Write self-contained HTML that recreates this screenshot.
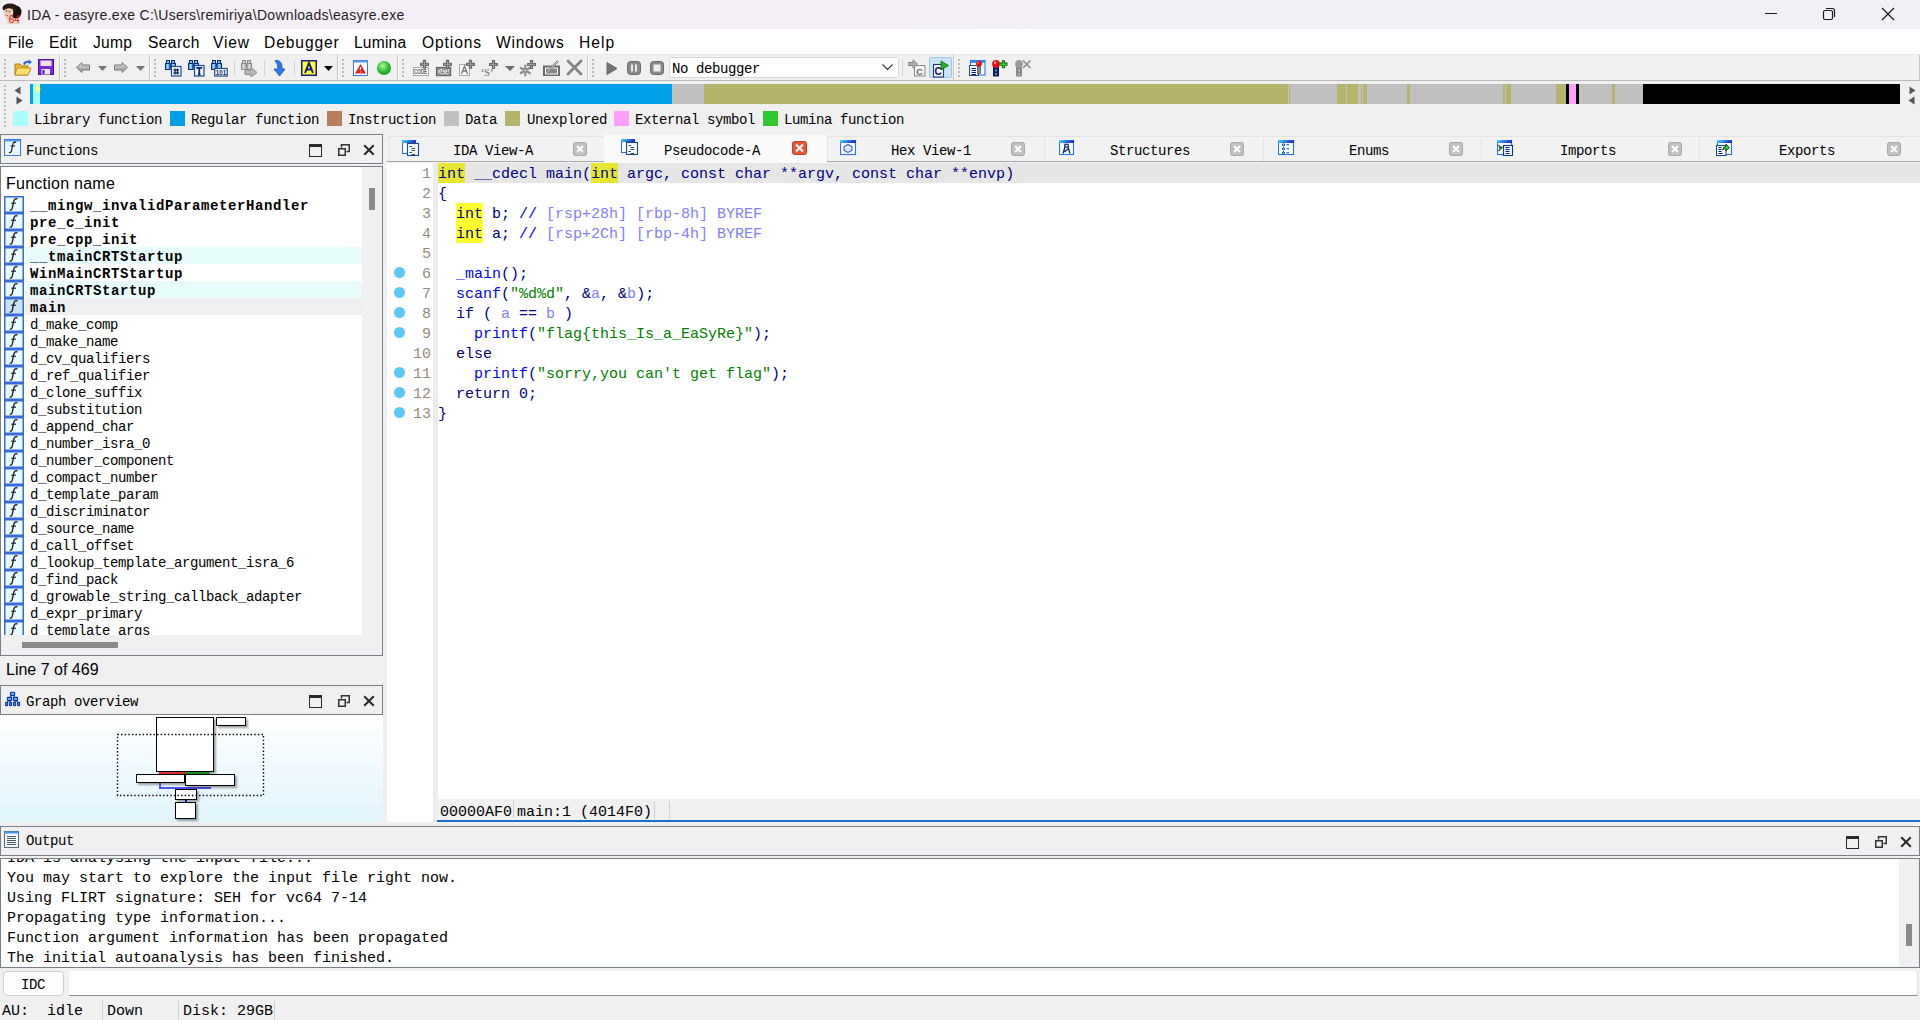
<!DOCTYPE html><html><head><meta charset="utf-8"><title>IDA</title><style>
*{margin:0;padding:0;box-sizing:border-box}
html,body{width:1920px;height:1020px;overflow:hidden;background:#f0f0f0;position:relative;font-family:"Liberation Sans",sans-serif}
.a{position:absolute}
.mono{font-family:"Liberation Mono",monospace}
.sans{font-family:"Liberation Sans",sans-serif}
.t{position:absolute;white-space:pre;line-height:1}
.ln{position:absolute;white-space:pre;font-family:"Liberation Mono",monospace;font-size:15px;line-height:20px}
</style></head><body>
<div class="a" style="left:0;top:0;width:1920px;height:29px;background:linear-gradient(90deg,#f4eef5 0%,#f5eef6 45%,#f3eff6 55%,#f2f0f6 65%,#f0f1f7 100%)"></div>
<svg class="a" style="left:0px;top:0px" width="26" height="28" viewBox="0 0 26 28">
<path d="M6 17 Q9 22 7 24 L20 24 Q17 21 16 17Z" fill="#e6d0c0"/>
<ellipse cx="16" cy="12" rx="5.5" ry="6.5" fill="#1a1010"/>
<ellipse cx="10" cy="8" rx="7.5" ry="4.5" fill="#2a1a14"/>
<ellipse cx="8.5" cy="12.5" rx="4.8" ry="6.2" fill="#e8cdb8"/>
<path d="M3 8 Q7 4 13 6 L12 9 Q8 7 4 10Z" fill="#2a1a14"/>
<circle cx="6.5" cy="11" r="0.8" fill="#5a4030"/><circle cx="9.5" cy="11.5" r="0.8" fill="#5a4030"/>
<path d="M5.5 15.5 Q7 16.2 8 15.5" stroke="#c05a50" stroke-width="0.9" fill="none"/>
<text x="8.8" y="23.2" font-family="Liberation Sans" font-size="10.5" textLength="11" lengthAdjust="spacingAndGlyphs" fill="#e01a10">64</text>
</svg>
<div class="t sans" style="left:27px;top:8px;font-size:14px;letter-spacing:0.3px;color:#1f1f1f">IDA - easyre.exe C:\Users\remiriya\Downloads\easyre.exe</div>
<div class="a" style="left:1765px;top:13px;width:12px;height:1px;background:#1a1a1a"></div>
<svg class="a" style="left:1822px;top:7px" width="14" height="14" viewBox="0 0 14 14"><rect x="1.5" y="3.5" width="9" height="9" rx="1.5" fill="none" stroke="#1a1a1a" stroke-width="1.2"/><path d="M4 1.5 H10.5 Q12.5 1.5 12.5 3.5 V10" fill="none" stroke="#1a1a1a" stroke-width="1.2"/></svg>
<svg class="a" style="left:1881px;top:7px" width="14" height="14" viewBox="0 0 14 14"><path d="M1 1 L13 13 M13 1 L1 13" stroke="#1a1a1a" stroke-width="1.2"/></svg>
<div class="a" style="left:0;top:29px;width:1920px;height:26px;background:#ffffff"></div>
<div class="t sans" style="left:8px;top:34.5px;font-size:15.6px;letter-spacing:0.15px;color:#000">File</div>
<div class="t sans" style="left:49px;top:34.5px;font-size:15.6px;letter-spacing:0.30px;color:#000">Edit</div>
<div class="t sans" style="left:93px;top:34.5px;font-size:15.6px;letter-spacing:0.30px;color:#000">Jump</div>
<div class="t sans" style="left:148px;top:34.5px;font-size:15.6px;letter-spacing:0.40px;color:#000">Search</div>
<div class="t sans" style="left:213px;top:34.5px;font-size:15.6px;letter-spacing:0.80px;color:#000">View</div>
<div class="t sans" style="left:264px;top:34.5px;font-size:15.6px;letter-spacing:0.90px;color:#000">Debugger</div>
<div class="t sans" style="left:354px;top:34.5px;font-size:15.6px;letter-spacing:0.20px;color:#000">Lumina</div>
<div class="t sans" style="left:422px;top:34.5px;font-size:15.6px;letter-spacing:0.90px;color:#000">Options</div>
<div class="t sans" style="left:496px;top:34.5px;font-size:15.6px;letter-spacing:0.75px;color:#000">Windows</div>
<div class="t sans" style="left:579px;top:34.5px;font-size:15.6px;letter-spacing:1.00px;color:#000">Help</div>
<div class="a" style="left:0;top:54px;width:1920px;height:1px;background:#e8e8e8"></div>
<div class="a" style="left:0;top:55px;width:1920px;height:25px;background:#f0f0f0"></div>
<div class="a" style="left:0;top:80px;width:1920px;height:1px;background:#b9b9b9"></div>
<div class="a" style="left:1919px;top:55px;width:1px;height:25px;background:#c8c8c8"></div>
<div class="a" style="left:4px;top:59px;width:2px;height:2px;background:#bcbcbc"></div><div class="a" style="left:4px;top:63px;width:2px;height:2px;background:#bcbcbc"></div><div class="a" style="left:4px;top:67px;width:2px;height:2px;background:#bcbcbc"></div><div class="a" style="left:4px;top:71px;width:2px;height:2px;background:#bcbcbc"></div><div class="a" style="left:4px;top:75px;width:2px;height:2px;background:#bcbcbc"></div>
<div class="a" style="left:64px;top:59px;width:2px;height:2px;background:#bcbcbc"></div><div class="a" style="left:64px;top:63px;width:2px;height:2px;background:#bcbcbc"></div><div class="a" style="left:64px;top:67px;width:2px;height:2px;background:#bcbcbc"></div><div class="a" style="left:64px;top:71px;width:2px;height:2px;background:#bcbcbc"></div><div class="a" style="left:64px;top:75px;width:2px;height:2px;background:#bcbcbc"></div>
<div class="a" style="left:154px;top:59px;width:2px;height:2px;background:#bcbcbc"></div><div class="a" style="left:154px;top:63px;width:2px;height:2px;background:#bcbcbc"></div><div class="a" style="left:154px;top:67px;width:2px;height:2px;background:#bcbcbc"></div><div class="a" style="left:154px;top:71px;width:2px;height:2px;background:#bcbcbc"></div><div class="a" style="left:154px;top:75px;width:2px;height:2px;background:#bcbcbc"></div>
<div class="a" style="left:342px;top:59px;width:2px;height:2px;background:#bcbcbc"></div><div class="a" style="left:342px;top:63px;width:2px;height:2px;background:#bcbcbc"></div><div class="a" style="left:342px;top:67px;width:2px;height:2px;background:#bcbcbc"></div><div class="a" style="left:342px;top:71px;width:2px;height:2px;background:#bcbcbc"></div><div class="a" style="left:342px;top:75px;width:2px;height:2px;background:#bcbcbc"></div>
<div class="a" style="left:402px;top:59px;width:2px;height:2px;background:#bcbcbc"></div><div class="a" style="left:402px;top:63px;width:2px;height:2px;background:#bcbcbc"></div><div class="a" style="left:402px;top:67px;width:2px;height:2px;background:#bcbcbc"></div><div class="a" style="left:402px;top:71px;width:2px;height:2px;background:#bcbcbc"></div><div class="a" style="left:402px;top:75px;width:2px;height:2px;background:#bcbcbc"></div>
<div class="a" style="left:592px;top:59px;width:2px;height:2px;background:#bcbcbc"></div><div class="a" style="left:592px;top:63px;width:2px;height:2px;background:#bcbcbc"></div><div class="a" style="left:592px;top:67px;width:2px;height:2px;background:#bcbcbc"></div><div class="a" style="left:592px;top:71px;width:2px;height:2px;background:#bcbcbc"></div><div class="a" style="left:592px;top:75px;width:2px;height:2px;background:#bcbcbc"></div>
<div class="a" style="left:958px;top:59px;width:2px;height:2px;background:#bcbcbc"></div><div class="a" style="left:958px;top:63px;width:2px;height:2px;background:#bcbcbc"></div><div class="a" style="left:958px;top:67px;width:2px;height:2px;background:#bcbcbc"></div><div class="a" style="left:958px;top:71px;width:2px;height:2px;background:#bcbcbc"></div><div class="a" style="left:958px;top:75px;width:2px;height:2px;background:#bcbcbc"></div>
<div class="a" style="left:59px;top:55px;width:1px;height:25px;background:#c4c4c4"></div>
<div class="a" style="left:60px;top:55px;width:1px;height:25px;background:#fbfbfb"></div>
<div class="a" style="left:149px;top:55px;width:1px;height:25px;background:#c4c4c4"></div>
<div class="a" style="left:150px;top:55px;width:1px;height:25px;background:#fbfbfb"></div>
<div class="a" style="left:337px;top:55px;width:1px;height:25px;background:#c4c4c4"></div>
<div class="a" style="left:338px;top:55px;width:1px;height:25px;background:#fbfbfb"></div>
<div class="a" style="left:397px;top:55px;width:1px;height:25px;background:#c4c4c4"></div>
<div class="a" style="left:398px;top:55px;width:1px;height:25px;background:#fbfbfb"></div>
<div class="a" style="left:587px;top:55px;width:1px;height:25px;background:#c4c4c4"></div>
<div class="a" style="left:588px;top:55px;width:1px;height:25px;background:#fbfbfb"></div>
<div class="a" style="left:953px;top:55px;width:1px;height:25px;background:#c4c4c4"></div>
<div class="a" style="left:954px;top:55px;width:1px;height:25px;background:#fbfbfb"></div>
<div class="a" style="left:234px;top:60px;width:1px;height:16px;background:#d4d4d4"></div>
<div class="a" style="left:264px;top:60px;width:1px;height:16px;background:#d4d4d4"></div>
<div class="a" style="left:294px;top:60px;width:1px;height:16px;background:#d4d4d4"></div>
<div class="a" style="left:902px;top:60px;width:1px;height:16px;background:#d4d4d4"></div>
<svg class="a" style="left:14px;top:59px" width="18" height="18" viewBox="0 0 18 18"><path d="M1 5 H6 L8 7 H14 V16 H1Z" fill="#e8b830" stroke="#b08010" stroke-width="1"/><path d="M3 9 H17 L14 16 H1Z" fill="#ffe070" stroke="#c09020" stroke-width="1"/><path d="M9 5 Q11 1 15 2 L14 0 L18 3 L14 6 L15 4 Q12 3 11 6Z" fill="#3060e0"/></svg>
<svg class="a" style="left:38px;top:59px" width="17" height="17" viewBox="0 0 17 17"><rect x="0.5" y="0.5" width="15" height="15" fill="#7a28e0" stroke="#4a10a0"/><rect x="2.5" y="1.5" width="11" height="5.5" fill="#f0e0e4"/><rect x="3.5" y="10" width="8.5" height="5.5" fill="#e8e8f8"/><rect x="4.5" y="11" width="2" height="4" fill="#4a10a0"/></svg>
<svg class="a" style="left:76px;top:62px" width="14" height="11" viewBox="0 0 14 11"><defs><linearGradient id="arg" x1="0" x2="0" y1="0" y2="1"><stop offset="0" stop-color="#e0e0e0"/><stop offset="1" stop-color="#909090"/></linearGradient></defs><path d="M0.5 5.5 L6 0.5 V3 H13.5 V8 H6 V10.5Z" fill="url(#arg)" stroke="#7a7a7a" stroke-width="1"/></svg>
<svg class="a" style="left:98px;top:66px" width="9" height="5" viewBox="0 0 9 5"><path d="M0 0 H9 L4.5 5Z" fill="#777"/></svg>
<svg class="a" style="left:114px;top:62px" width="14" height="11" viewBox="0 0 14 11"><path d="M13.5 5.5 L8 0.5 V3 H0.5 V8 H8 V10.5Z" fill="url(#arg)" stroke="#7a7a7a" stroke-width="1"/></svg>
<svg class="a" style="left:136px;top:66px" width="9" height="5" viewBox="0 0 9 5"><path d="M0 0 H9 L4.5 5Z" fill="#777"/></svg>
<svg class="a" style="left:165px;top:60px" width="17" height="17" viewBox="0 0 17 17"><defs><linearGradient id="bg1" x1="0" x2="1" y1="0" y2="0"><stop offset="0" stop-color="#3a8ae8"/><stop offset="0.5" stop-color="#a8dcff"/><stop offset="1" stop-color="#3a8ae8"/></linearGradient></defs><rect x="1.5" y="0.5" width="3" height="3.5" fill="url(#bg1)" stroke="#0a2a7a" stroke-width="1"/><rect x="6.5" y="0.5" width="3" height="3.5" fill="url(#bg1)" stroke="#0a2a7a" stroke-width="1"/><rect x="0.5" y="3.5" width="4.5" height="6" fill="url(#bg1)" stroke="#0a2a7a" stroke-width="1"/><rect x="6" y="3.5" width="4.5" height="6" fill="url(#bg1)" stroke="#0a2a7a" stroke-width="1"/><rect x="5" y="4.5" width="1" height="2" fill="#0a2a7a"/><rect x="6.5" y="6.5" width="9.5" height="9.5" fill="#fff" stroke="#1a4a8a" stroke-width="1.2"/><path d="M8.5 10 H14 M8.5 13 H14 M10 8.5 V14.5 M12.5 8.5 V14.5" stroke="#0a2a6a" stroke-width="1.3"/></svg>
<svg class="a" style="left:188px;top:60px" width="17" height="17" viewBox="0 0 17 17"><defs><linearGradient id="bg2" x1="0" x2="1" y1="0" y2="0"><stop offset="0" stop-color="#3a8ae8"/><stop offset="0.5" stop-color="#a8dcff"/><stop offset="1" stop-color="#3a8ae8"/></linearGradient></defs><rect x="1.5" y="0.5" width="3" height="3.5" fill="url(#bg2)" stroke="#0a2a7a" stroke-width="1"/><rect x="6.5" y="0.5" width="3" height="3.5" fill="url(#bg2)" stroke="#0a2a7a" stroke-width="1"/><rect x="0.5" y="3.5" width="4.5" height="6" fill="url(#bg2)" stroke="#0a2a7a" stroke-width="1"/><rect x="6" y="3.5" width="4.5" height="6" fill="url(#bg2)" stroke="#0a2a7a" stroke-width="1"/><rect x="5" y="4.5" width="1" height="2" fill="#0a2a7a"/><rect x="6.5" y="5.5" width="9.5" height="10.5" fill="#eef6ff" stroke="#1a4a8a" stroke-width="1.2"/><path d="M8.3 7.8 H14.2 M11.25 7.8 V14.5 M10 14.5 H12.5" stroke="#0a2a6a" stroke-width="1.8"/></svg>
<svg class="a" style="left:211px;top:60px" width="17" height="17" viewBox="0 0 17 17"><defs><linearGradient id="bg3" x1="0" x2="1" y1="0" y2="0"><stop offset="0" stop-color="#3a8ae8"/><stop offset="0.5" stop-color="#a8dcff"/><stop offset="1" stop-color="#3a8ae8"/></linearGradient></defs><rect x="1.5" y="0.5" width="3" height="3.5" fill="url(#bg3)" stroke="#0a2a7a" stroke-width="1"/><rect x="6.5" y="0.5" width="3" height="3.5" fill="url(#bg3)" stroke="#0a2a7a" stroke-width="1"/><rect x="0.5" y="3.5" width="4.5" height="6" fill="url(#bg3)" stroke="#0a2a7a" stroke-width="1"/><rect x="6" y="3.5" width="4.5" height="6" fill="url(#bg3)" stroke="#0a2a7a" stroke-width="1"/><rect x="5" y="4.5" width="1" height="2" fill="#0a2a7a"/><rect x="3.7" y="8.5" width="12.5" height="7.5" fill="#fff" stroke="#1a4a8a" stroke-width="1.2"/><text x="4.8" y="14.8" font-family="Liberation Sans" font-weight="bold" font-size="6.5" textLength="10.5" lengthAdjust="spacingAndGlyphs" fill="#0a2a6a">101</text></svg>
<svg class="a" style="left:241px;top:60px" width="17" height="17" viewBox="0 0 17 17"><defs><linearGradient id="bg4" x1="0" x2="1" y1="0" y2="0"><stop offset="0" stop-color="#a8a8a8"/><stop offset="0.5" stop-color="#e0e0e0"/><stop offset="1" stop-color="#a8a8a8"/></linearGradient></defs><rect x="1.5" y="0.5" width="3" height="3.5" fill="url(#bg4)" stroke="#8a8a8a" stroke-width="1"/><rect x="6.5" y="0.5" width="3" height="3.5" fill="url(#bg4)" stroke="#8a8a8a" stroke-width="1"/><rect x="0.5" y="3.5" width="4.5" height="6" fill="url(#bg4)" stroke="#8a8a8a" stroke-width="1"/><rect x="6" y="3.5" width="4.5" height="6" fill="url(#bg4)" stroke="#8a8a8a" stroke-width="1"/><rect x="5" y="4.5" width="1" height="2" fill="#8a8a8a"/><path d="M4 10 H10 V7.5 L16 12.5 L10 17 V14.5 H4Z" fill="#b8b8b8" stroke="#8a8a8a"/></svg>
<svg class="a" style="left:273px;top:60px" width="13" height="17" viewBox="0 0 13 17"><path d="M3 0 Q10 1 9 9 H12 L6.5 16 L1 9 H5 Q5 3 2 1Z" fill="#2a7ae8" stroke="#1050c0" stroke-width="0.8"/></svg>
<svg class="a" style="left:301px;top:60px" width="16" height="16" viewBox="0 0 16 16"><rect x="0.75" y="0.75" width="14.5" height="14.5" fill="#ffff30" stroke="#1a1a80" stroke-width="1.5"/><path d="M4 13 L8 3 L12 13 M5.5 9.5 H10.5" stroke="#1a1a90" stroke-width="2" fill="none"/></svg>
<svg class="a" style="left:324px;top:66px" width="9" height="5" viewBox="0 0 9 5"><path d="M0 0 H9 L4.5 5Z" fill="#000"/></svg>
<svg class="a" style="left:353px;top:60px" width="15" height="16" viewBox="0 0 15 16"><rect x="0.5" y="0.5" width="14" height="15" fill="#fff" stroke="#3a7ad8"/><rect x="0.5" y="0.5" width="14" height="2" fill="#5a9ae8"/><path d="M7.5 4 L13 13.5 H2Z" fill="#e02020"/><path d="M7.5 7 V10 M7.5 11.5 V12.5" stroke="#fff" stroke-width="1.2"/></svg>
<div class="a" style="left:377px;top:61px;width:14px;height:14px;border-radius:50%;background:radial-gradient(circle at 40% 35%,#b0ffa0 0%,#30c030 45%,#108010 100%)"></div>
<svg class="a" style="left:412px;top:59px" width="20" height="18" viewBox="0 0 20 18"><rect x="1.5" y="8.5" width="15" height="8" fill="#fff" stroke="#aaa"/><text x="2" y="15" font-family="Liberation Sans" font-weight="bold" font-size="6.4" textLength="13" lengthAdjust="spacingAndGlyphs" fill="#555">CODE</text><path d="M8.0 5.3 h9 M12.5 0.8 v9" stroke="#6a6a6a" stroke-width="3.2"/><path d="M9.0 5.3 h7 M12.5 1.8 v7" stroke="#9a9a9a" stroke-width="1"/></svg>
<svg class="a" style="left:435px;top:59px" width="20" height="18" viewBox="0 0 20 18"><rect x="1.8" y="8.8" width="13.5" height="7.5" fill="#fff" stroke="#666" stroke-width="1.8"/><text x="3" y="15" font-family="Liberation Sans" font-weight="bold" font-size="6.4" textLength="11" lengthAdjust="spacingAndGlyphs" fill="#666">DATA</text><path d="M8.0 5.3 h9 M12.5 0.8 v9" stroke="#6a6a6a" stroke-width="3.2"/><path d="M9.0 5.3 h7 M12.5 1.8 v7" stroke="#9a9a9a" stroke-width="1"/></svg>
<svg class="a" style="left:458px;top:59px" width="20" height="18" viewBox="0 0 20 18"><rect x="1.5" y="5.5" width="10" height="11" fill="#fafafa" stroke="#aaa"/><path d="M3.5 15 L6.5 7 L9.5 15 M5 12 H8" stroke="#777" stroke-width="1.3" fill="none"/><path d="M8.0 5.3 h9 M12.5 0.8 v9" stroke="#6a6a6a" stroke-width="3.2"/><path d="M9.0 5.3 h7 M12.5 1.8 v7" stroke="#9a9a9a" stroke-width="1"/></svg>
<svg class="a" style="left:481px;top:59px" width="18" height="18" viewBox="0 0 18 18"><text x="0" y="17" font-family="Liberation Serif" font-weight="bold" font-size="10" fill="#888">‘S’</text><path d="M8.0 5.5 h9 M12.5 1.0 v9" stroke="#6a6a6a" stroke-width="3.2"/><path d="M9.0 5.5 h7 M12.5 2.0 v7" stroke="#9a9a9a" stroke-width="1"/></svg>
<svg class="a" style="left:505px;top:66px" width="10" height="5" viewBox="0 0 10 5"><path d="M0 0 H10 L5 5Z" fill="#6a6a6a"/></svg>
<svg class="a" style="left:519px;top:59px" width="18" height="18" viewBox="0 0 18 18"><path d="M6.3 6.5 V16.5 M1.8 9 L10.8 14 M10.8 9 L1.8 14" stroke="#8a8a8a" stroke-width="2.2" stroke-linecap="round"/><circle cx="6.3" cy="11.5" r="1" fill="#ccc"/><path d="M8.0 5.5 h9 M12.5 1.0 v9" stroke="#6a6a6a" stroke-width="3.2"/><path d="M9.0 5.5 h7 M12.5 2.0 v7" stroke="#9a9a9a" stroke-width="1"/></svg>
<svg class="a" style="left:543px;top:59px" width="17" height="17" viewBox="0 0 17 17"><rect x="1" y="7.5" width="15" height="9" fill="#fff" stroke="#6a6a6a" stroke-width="2"/><rect x="3" y="9.5" width="11" height="5" fill="#888"/><path d="M3.5 14 L15 2" stroke="#777" stroke-width="2"/><path d="M3.5 14 L15 2" stroke="#eee" stroke-width="0.8"/></svg>
<svg class="a" style="left:566px;top:59px" width="17" height="17" viewBox="0 0 17 17"><path d="M2 2 L15 15 M15 2 L2 15" stroke="#7a7a7a" stroke-width="2.6" stroke-linecap="round"/><path d="M2 2 L15 15 M15 2 L2 15" stroke="#b0b0b0" stroke-width="0.8" stroke-dasharray="1 1"/></svg>
<svg class="a" style="left:606px;top:62px" width="12" height="13" viewBox="0 0 12 13"><path d="M1 0.5 L11 6.5 L1 12.5Z" fill="#777" stroke="#666"/></svg>
<svg class="a" style="left:627px;top:61px" width="14" height="14" viewBox="0 0 14 14"><rect x="0.5" y="0.5" width="13" height="13" rx="3" fill="#8a8a8a" stroke="#6a6a6a"/><rect x="4" y="3.5" width="2" height="7" fill="#eee"/><rect x="8" y="3.5" width="2" height="7" fill="#eee"/></svg>
<svg class="a" style="left:650px;top:61px" width="14" height="14" viewBox="0 0 14 14"><rect x="0.5" y="0.5" width="13" height="13" rx="3" fill="#8a8a8a" stroke="#6a6a6a"/><rect x="3.5" y="3.5" width="7" height="7" fill="#eee"/></svg>
<div class="a" style="left:669px;top:57px;width:230px;height:21px;background:#fff;border:1px solid #d8d8d8;border-radius:2px"></div>
<div class="t mono" style="left:672px;top:62px;font-size:14px;letter-spacing:-0.4px;color:#000">No debugger</div>
<svg class="a" style="left:882px;top:64px" width="11" height="7" viewBox="0 0 11 7"><path d="M0.5 0.5 L5.5 5.5 L10.5 0.5" stroke="#333" fill="none" stroke-width="1.1"/></svg>
<svg class="a" style="left:908px;top:59px" width="18" height="18" viewBox="0 0 18 18"><rect x="6.5" y="6.5" width="10.5" height="10.5" fill="#f4f4f4" stroke="#8a8a8a"/><text x="8.2" y="15.5" font-family="Liberation Sans" font-weight="bold" font-size="9" fill="#6a6a6a">C</text><path d="M0.5 3.5 H5 V0.8 L9.5 5 L5 9.2 V6.5 H0.5Z" fill="#b0b0b0" stroke="#808080" stroke-width="0.9"/></svg>
<div class="a" style="left:929px;top:57px;width:23px;height:21px;background:#cce4f7;border:1px solid #99c9ef;border-radius:2px"></div>
<svg class="a" style="left:932px;top:60px" width="18" height="18" viewBox="0 0 18 18"><rect x="1.5" y="4.5" width="10" height="12.5" fill="#f8fbff" stroke="#1a3a7a" stroke-width="1.1"/><text x="2.6" y="15" font-family="Liberation Sans" font-weight="bold" font-size="10" fill="#0a0a6a">C</text><path d="M9 1 L16.5 5.5 L9 10Z" fill="#28b028" stroke="#0a6a0a" stroke-width="0.8"/></svg>
<svg class="a" style="left:969px;top:60px" width="17" height="17" viewBox="0 0 17 17"><rect x="1.5" y="0.5" width="14.5" height="14.5" fill="#f4faff" stroke="#2a6ae0"/><rect x="1.5" y="0.5" width="14.5" height="2.5" fill="#3a90f0"/><rect x="0.5" y="5.5" width="9" height="10" fill="#f4faff" stroke="#1a4a8a"/><path d="M2.5 8.5 H7 M2.5 10.5 H7 M2.5 12.5 H7 M2.5 14.5 H7" stroke="#0a10a0"/><rect x="8.5" y="6" width="3" height="7.5" fill="#888" stroke="#333" stroke-width="0.6"/><circle cx="10" cy="3.6" r="2.9" fill="#e81010"/><circle cx="9.2" cy="2.8" r="0.9" fill="#ff9090"/></svg>
<svg class="a" style="left:991px;top:60px" width="18" height="17" viewBox="0 0 18 17"><rect x="2" y="6.5" width="6" height="10" fill="#0a1a6a"/><circle cx="5" cy="10.5" r="1.1" fill="#999"/><circle cx="5" cy="14" r="1.1" fill="#999"/><circle cx="5" cy="4" r="3.9" fill="#e81010"/><circle cx="4" cy="2.8" r="1.2" fill="#ff9a9a"/><path d="M8.5 4.2 H16.5 M12.5 0.2 V8.2" stroke="#0a5a0a" stroke-width="3.2"/><path d="M9.2 4.2 H15.8 M12.5 0.9 V7.5" stroke="#30d030" stroke-width="1.6"/></svg>
<svg class="a" style="left:1014px;top:60px" width="18" height="17" viewBox="0 0 18 17"><rect x="2" y="6.5" width="6" height="10" fill="#8a8a8a"/><circle cx="5" cy="10.5" r="1.1" fill="#bbb"/><circle cx="5" cy="14" r="1.1" fill="#bbb"/><circle cx="5" cy="4" r="3.9" fill="#9a9a9a"/><path d="M9 0.5 L16.5 8 M16.5 0.5 L9 8" stroke="#8a8a8a" stroke-width="1.5"/></svg>
<div class="a" style="left:4px;top:85px;width:2px;height:2px;background:#bcbcbc"></div><div class="a" style="left:4px;top:89px;width:2px;height:2px;background:#bcbcbc"></div><div class="a" style="left:4px;top:93px;width:2px;height:2px;background:#bcbcbc"></div><div class="a" style="left:4px;top:97px;width:2px;height:2px;background:#bcbcbc"></div><div class="a" style="left:4px;top:101px;width:2px;height:2px;background:#bcbcbc"></div><div class="a" style="left:4px;top:105px;width:2px;height:2px;background:#bcbcbc"></div>
<svg class="a" style="left:14px;top:86px" width="7" height="9" viewBox="0 0 7 9"><path d="M6.5 0.5 V8.5 L0.5 4.5Z" fill="#555"/></svg>
<svg class="a" style="left:16px;top:96px" width="7" height="9" viewBox="0 0 7 9"><path d="M0.5 0.5 V8.5 L6.5 4.5Z" fill="#555"/></svg>
<svg class="a" style="left:1909px;top:86px" width="7" height="9" viewBox="0 0 7 9"><path d="M0.5 0.5 V8.5 L6.5 4.5Z" fill="#555"/></svg>
<svg class="a" style="left:1908px;top:96px" width="7" height="9" viewBox="0 0 7 9"><path d="M6.5 0.5 V8.5 L0.5 4.5Z" fill="#555"/></svg>
<div class="a" style="left:30px;top:84px;width:3px;height:20px;background:#00a0e8"></div><div class="a" style="left:33px;top:84px;width:7px;height:20px;background:#a8fcfc"></div><div class="a" style="left:40px;top:84px;width:632px;height:20px;background:#00a0e8"></div><div class="a" style="left:672px;top:84px;width:1px;height:20px;background:#c8c0b8"></div><div class="a" style="left:673px;top:84px;width:31px;height:20px;background:#c0c0c0"></div><div class="a" style="left:704px;top:84px;width:584px;height:20px;background:#b4b46a"></div><div class="a" style="left:1288px;top:84px;width:1px;height:20px;background:#c0c0c0"></div><div class="a" style="left:1289px;top:84px;width:1px;height:20px;background:#b4b46a"></div><div class="a" style="left:1290px;top:84px;width:47px;height:20px;background:#c0c0c0"></div><div class="a" style="left:1337px;top:84px;width:9px;height:20px;background:#b4b46a"></div><div class="a" style="left:1346px;top:84px;width:1px;height:20px;background:#c0c0c0"></div><div class="a" style="left:1347px;top:84px;width:11px;height:20px;background:#b4b46a"></div><div class="a" style="left:1358px;top:84px;width:3px;height:20px;background:#c0c0c0"></div><div class="a" style="left:1361px;top:84px;width:1px;height:20px;background:#b4b46a"></div><div class="a" style="left:1362px;top:84px;width:1px;height:20px;background:#c0c0c0"></div><div class="a" style="left:1363px;top:84px;width:4px;height:20px;background:#b4b46a"></div><div class="a" style="left:1367px;top:84px;width:40px;height:20px;background:#c0c0c0"></div><div class="a" style="left:1407px;top:84px;width:3px;height:20px;background:#b4b46a"></div><div class="a" style="left:1410px;top:84px;width:93px;height:20px;background:#c0c0c0"></div><div class="a" style="left:1503px;top:84px;width:2px;height:20px;background:#b4b46a"></div><div class="a" style="left:1505px;top:84px;width:1px;height:20px;background:#c0c0c0"></div><div class="a" style="left:1506px;top:84px;width:5px;height:20px;background:#b4b46a"></div><div class="a" style="left:1511px;top:84px;width:45px;height:20px;background:#c0c0c0"></div><div class="a" style="left:1556px;top:84px;width:10px;height:20px;background:#b4b46a"></div><div class="a" style="left:1566px;top:84px;width:3px;height:20px;background:#000000"></div><div class="a" style="left:1569px;top:84px;width:7px;height:20px;background:#ffa0ff"></div><div class="a" style="left:1576px;top:84px;width:3px;height:20px;background:#000000"></div><div class="a" style="left:1579px;top:84px;width:33px;height:20px;background:#c0c0c0"></div><div class="a" style="left:1612px;top:84px;width:3px;height:20px;background:#b4b46a"></div><div class="a" style="left:1615px;top:84px;width:28px;height:20px;background:#c0c0c0"></div><div class="a" style="left:1643px;top:84px;width:257px;height:20px;background:#000000"></div>
<svg class="a" style="left:35px;top:85px" width="6" height="8" viewBox="0 0 6 8"><path d="M1.5 0 H4.5 V4 H6 L3 7.5 L0 4 H1.5Z" fill="#ffff60"/></svg>
<div class="a" style="left:4px;top:109px;width:2px;height:2px;background:#bcbcbc"></div><div class="a" style="left:4px;top:113px;width:2px;height:2px;background:#bcbcbc"></div><div class="a" style="left:4px;top:117px;width:2px;height:2px;background:#bcbcbc"></div><div class="a" style="left:4px;top:121px;width:2px;height:2px;background:#bcbcbc"></div><div class="a" style="left:4px;top:125px;width:2px;height:2px;background:#bcbcbc"></div>
<div class="a" style="left:13px;top:111px;width:15px;height:15px;background:#a8fcfc"></div>
<div class="t mono" style="left:34px;top:113px;font-size:14px;letter-spacing:-0.4px;color:#000">Library function</div>
<div class="a" style="left:170px;top:111px;width:15px;height:15px;background:#00a0e8"></div>
<div class="t mono" style="left:191px;top:113px;font-size:14px;letter-spacing:-0.4px;color:#000">Regular function</div>
<div class="a" style="left:327px;top:111px;width:15px;height:15px;background:#b8805a"></div>
<div class="t mono" style="left:348px;top:113px;font-size:14px;letter-spacing:-0.4px;color:#000">Instruction</div>
<div class="a" style="left:444px;top:111px;width:15px;height:15px;background:#c0c0c0"></div>
<div class="t mono" style="left:465px;top:113px;font-size:14px;letter-spacing:-0.4px;color:#000">Data</div>
<div class="a" style="left:505px;top:111px;width:15px;height:15px;background:#b4b46a"></div>
<div class="t mono" style="left:527px;top:113px;font-size:14px;letter-spacing:-0.4px;color:#000">Unexplored</div>
<div class="a" style="left:614px;top:111px;width:15px;height:15px;background:#ffa0ff"></div>
<div class="t mono" style="left:635px;top:113px;font-size:14px;letter-spacing:-0.4px;color:#000">External symbol</div>
<div class="a" style="left:763px;top:111px;width:15px;height:15px;background:#30c830"></div>
<div class="t mono" style="left:784px;top:113px;font-size:14px;letter-spacing:-0.4px;color:#000">Lumina function</div>
<div class="a" style="left:0px;top:134px;width:383px;height:30px;background:#f0f0f0;border:1px solid #777f89"></div><svg class="a" style="left:4px;top:139px" width="17" height="17" viewBox="0 0 17 17"><rect x="0.5" y="0.5" width="16" height="16" fill="#e8f8ff" stroke="#3a78e0"/><rect x="1" y="1" width="15" height="1.5" fill="#5aa0f0"/><path d="M12 3.5 Q11 2.5 9.8 3.5 Q9 4.2 8.7 6 L7.5 12 Q7 14 5 13.4" fill="none" stroke="#1a1a2a" stroke-width="1.2"/><path d="M6.5 7 H11" stroke="#1a1a2a" stroke-width="1"/></svg><div class="t mono" style="left:26px;top:144px;font-size:14px;letter-spacing:-0.4px;color:#000">Functions</div><div class="a" style="left:309px;top:144px;width:13px;height:13px;border:1.5px solid #2a2a2a;border-top:3px solid #2a2a2a"></div><svg class="a" style="left:338px;top:144px" width="12" height="12" viewBox="0 0 12 12"><rect x="0.75" y="4.75" width="6.5" height="6.5" fill="none" stroke="#333" stroke-width="1.5"/><path d="M3.5 3.5 V0.75 H11.25 V7.5 H8.5" fill="none" stroke="#333" stroke-width="1.5"/></svg><svg class="a" style="left:363px;top:144px" width="12" height="12" viewBox="0 0 12 12"><path d="M1.2 1.2 L10.8 10.8 M10.8 1.2 L1.2 10.8" stroke="#2a2a2a" stroke-width="2"/></svg>
<div class="a" style="left:0;top:166px;width:383px;height:490px;background:#f0f0f0;border:1px solid #777f89"></div>
<div class="a" style="left:1px;top:167px;width:361px;height:468px;background:#ffffff"></div>
<div class="t sans" style="left:6px;top:176px;font-size:16px;letter-spacing:0.25px;color:#000">Function name</div>
<div class="a" style="left:369px;top:188px;width:6px;height:22px;background:#8a8a8a"></div>
<div class="a" style="left:22px;top:642px;width:96px;height:6px;background:#8a8a8a"></div>
<div class="a" style="left:1px;top:196px;width:361px;height:439px;overflow:hidden"><svg class="a" style="left:3px;top:0px" width="20" height="17" viewBox="0 0 20 17"><rect x="0.75" y="0.75" width="18.5" height="15.5" fill="#e8fcff" stroke="#3a6ad8" stroke-width="1.5"/><path d="M13.5 3.2 Q12.2 2 10.8 3.2 Q10 4 9.6 6 L8.2 12.5 Q7.6 14.6 5.6 14 " fill="none" stroke="#1a1a2a" stroke-width="1.3"/><path d="M7.2 7.2 H12" stroke="#1a1a2a" stroke-width="1.1"/></svg><div class="t mono" style="left:29px;top:3px;font-size:14px;font-weight:bold;letter-spacing:0.6px;color:#000">__mingw_invalidParameterHandler</div><svg class="a" style="left:3px;top:17px" width="20" height="17" viewBox="0 0 20 17"><rect x="0.75" y="0.75" width="18.5" height="15.5" fill="#e8fcff" stroke="#3a6ad8" stroke-width="1.5"/><path d="M13.5 3.2 Q12.2 2 10.8 3.2 Q10 4 9.6 6 L8.2 12.5 Q7.6 14.6 5.6 14 " fill="none" stroke="#1a1a2a" stroke-width="1.3"/><path d="M7.2 7.2 H12" stroke="#1a1a2a" stroke-width="1.1"/></svg><div class="t mono" style="left:29px;top:20px;font-size:14px;font-weight:bold;letter-spacing:0.6px;color:#000">pre_c_init</div><svg class="a" style="left:3px;top:34px" width="20" height="17" viewBox="0 0 20 17"><rect x="0.75" y="0.75" width="18.5" height="15.5" fill="#e8fcff" stroke="#3a6ad8" stroke-width="1.5"/><path d="M13.5 3.2 Q12.2 2 10.8 3.2 Q10 4 9.6 6 L8.2 12.5 Q7.6 14.6 5.6 14 " fill="none" stroke="#1a1a2a" stroke-width="1.3"/><path d="M7.2 7.2 H12" stroke="#1a1a2a" stroke-width="1.1"/></svg><div class="t mono" style="left:29px;top:37px;font-size:14px;font-weight:bold;letter-spacing:0.6px;color:#000">pre_cpp_init</div><div class="a" style="left:24px;top:51px;width:337px;height:17px;background:#e8fcfc"></div><svg class="a" style="left:3px;top:51px" width="20" height="17" viewBox="0 0 20 17"><rect x="0.75" y="0.75" width="18.5" height="15.5" fill="#e8fcff" stroke="#3a6ad8" stroke-width="1.5"/><path d="M13.5 3.2 Q12.2 2 10.8 3.2 Q10 4 9.6 6 L8.2 12.5 Q7.6 14.6 5.6 14 " fill="none" stroke="#1a1a2a" stroke-width="1.3"/><path d="M7.2 7.2 H12" stroke="#1a1a2a" stroke-width="1.1"/></svg><div class="t mono" style="left:29px;top:54px;font-size:14px;font-weight:bold;letter-spacing:0.6px;color:#000">__tmainCRTStartup</div><svg class="a" style="left:3px;top:68px" width="20" height="17" viewBox="0 0 20 17"><rect x="0.75" y="0.75" width="18.5" height="15.5" fill="#e8fcff" stroke="#3a6ad8" stroke-width="1.5"/><path d="M13.5 3.2 Q12.2 2 10.8 3.2 Q10 4 9.6 6 L8.2 12.5 Q7.6 14.6 5.6 14 " fill="none" stroke="#1a1a2a" stroke-width="1.3"/><path d="M7.2 7.2 H12" stroke="#1a1a2a" stroke-width="1.1"/></svg><div class="t mono" style="left:29px;top:71px;font-size:14px;font-weight:bold;letter-spacing:0.6px;color:#000">WinMainCRTStartup</div><div class="a" style="left:24px;top:85px;width:337px;height:17px;background:#e8fcfc"></div><svg class="a" style="left:3px;top:85px" width="20" height="17" viewBox="0 0 20 17"><rect x="0.75" y="0.75" width="18.5" height="15.5" fill="#e8fcff" stroke="#3a6ad8" stroke-width="1.5"/><path d="M13.5 3.2 Q12.2 2 10.8 3.2 Q10 4 9.6 6 L8.2 12.5 Q7.6 14.6 5.6 14 " fill="none" stroke="#1a1a2a" stroke-width="1.3"/><path d="M7.2 7.2 H12" stroke="#1a1a2a" stroke-width="1.1"/></svg><div class="t mono" style="left:29px;top:88px;font-size:14px;font-weight:bold;letter-spacing:0.6px;color:#000">mainCRTStartup</div><div class="a" style="left:24px;top:102px;width:337px;height:17px;background:#efefef"></div><svg class="a" style="left:3px;top:102px" width="20" height="17" viewBox="0 0 20 17"><rect x="0.75" y="0.75" width="18.5" height="15.5" fill="#c8e4f8" stroke="#3a6ad8" stroke-width="1.5"/><path d="M13.5 3.2 Q12.2 2 10.8 3.2 Q10 4 9.6 6 L8.2 12.5 Q7.6 14.6 5.6 14 " fill="none" stroke="#1a1a2a" stroke-width="1.3"/><path d="M7.2 7.2 H12" stroke="#1a1a2a" stroke-width="1.1"/></svg><div class="t mono" style="left:29px;top:105px;font-size:14px;font-weight:bold;letter-spacing:0.6px;color:#000">main</div><svg class="a" style="left:3px;top:119px" width="20" height="17" viewBox="0 0 20 17"><rect x="0.75" y="0.75" width="18.5" height="15.5" fill="#e8fcff" stroke="#3a6ad8" stroke-width="1.5"/><path d="M13.5 3.2 Q12.2 2 10.8 3.2 Q10 4 9.6 6 L8.2 12.5 Q7.6 14.6 5.6 14 " fill="none" stroke="#1a1a2a" stroke-width="1.3"/><path d="M7.2 7.2 H12" stroke="#1a1a2a" stroke-width="1.1"/></svg><div class="t mono" style="left:29px;top:122px;font-size:14px;letter-spacing:-0.4px;color:#000">d_make_comp</div><svg class="a" style="left:3px;top:136px" width="20" height="17" viewBox="0 0 20 17"><rect x="0.75" y="0.75" width="18.5" height="15.5" fill="#e8fcff" stroke="#3a6ad8" stroke-width="1.5"/><path d="M13.5 3.2 Q12.2 2 10.8 3.2 Q10 4 9.6 6 L8.2 12.5 Q7.6 14.6 5.6 14 " fill="none" stroke="#1a1a2a" stroke-width="1.3"/><path d="M7.2 7.2 H12" stroke="#1a1a2a" stroke-width="1.1"/></svg><div class="t mono" style="left:29px;top:139px;font-size:14px;letter-spacing:-0.4px;color:#000">d_make_name</div><svg class="a" style="left:3px;top:153px" width="20" height="17" viewBox="0 0 20 17"><rect x="0.75" y="0.75" width="18.5" height="15.5" fill="#e8fcff" stroke="#3a6ad8" stroke-width="1.5"/><path d="M13.5 3.2 Q12.2 2 10.8 3.2 Q10 4 9.6 6 L8.2 12.5 Q7.6 14.6 5.6 14 " fill="none" stroke="#1a1a2a" stroke-width="1.3"/><path d="M7.2 7.2 H12" stroke="#1a1a2a" stroke-width="1.1"/></svg><div class="t mono" style="left:29px;top:156px;font-size:14px;letter-spacing:-0.4px;color:#000">d_cv_qualifiers</div><svg class="a" style="left:3px;top:170px" width="20" height="17" viewBox="0 0 20 17"><rect x="0.75" y="0.75" width="18.5" height="15.5" fill="#e8fcff" stroke="#3a6ad8" stroke-width="1.5"/><path d="M13.5 3.2 Q12.2 2 10.8 3.2 Q10 4 9.6 6 L8.2 12.5 Q7.6 14.6 5.6 14 " fill="none" stroke="#1a1a2a" stroke-width="1.3"/><path d="M7.2 7.2 H12" stroke="#1a1a2a" stroke-width="1.1"/></svg><div class="t mono" style="left:29px;top:173px;font-size:14px;letter-spacing:-0.4px;color:#000">d_ref_qualifier</div><svg class="a" style="left:3px;top:187px" width="20" height="17" viewBox="0 0 20 17"><rect x="0.75" y="0.75" width="18.5" height="15.5" fill="#e8fcff" stroke="#3a6ad8" stroke-width="1.5"/><path d="M13.5 3.2 Q12.2 2 10.8 3.2 Q10 4 9.6 6 L8.2 12.5 Q7.6 14.6 5.6 14 " fill="none" stroke="#1a1a2a" stroke-width="1.3"/><path d="M7.2 7.2 H12" stroke="#1a1a2a" stroke-width="1.1"/></svg><div class="t mono" style="left:29px;top:190px;font-size:14px;letter-spacing:-0.4px;color:#000">d_clone_suffix</div><svg class="a" style="left:3px;top:204px" width="20" height="17" viewBox="0 0 20 17"><rect x="0.75" y="0.75" width="18.5" height="15.5" fill="#e8fcff" stroke="#3a6ad8" stroke-width="1.5"/><path d="M13.5 3.2 Q12.2 2 10.8 3.2 Q10 4 9.6 6 L8.2 12.5 Q7.6 14.6 5.6 14 " fill="none" stroke="#1a1a2a" stroke-width="1.3"/><path d="M7.2 7.2 H12" stroke="#1a1a2a" stroke-width="1.1"/></svg><div class="t mono" style="left:29px;top:207px;font-size:14px;letter-spacing:-0.4px;color:#000">d_substitution</div><svg class="a" style="left:3px;top:221px" width="20" height="17" viewBox="0 0 20 17"><rect x="0.75" y="0.75" width="18.5" height="15.5" fill="#e8fcff" stroke="#3a6ad8" stroke-width="1.5"/><path d="M13.5 3.2 Q12.2 2 10.8 3.2 Q10 4 9.6 6 L8.2 12.5 Q7.6 14.6 5.6 14 " fill="none" stroke="#1a1a2a" stroke-width="1.3"/><path d="M7.2 7.2 H12" stroke="#1a1a2a" stroke-width="1.1"/></svg><div class="t mono" style="left:29px;top:224px;font-size:14px;letter-spacing:-0.4px;color:#000">d_append_char</div><svg class="a" style="left:3px;top:238px" width="20" height="17" viewBox="0 0 20 17"><rect x="0.75" y="0.75" width="18.5" height="15.5" fill="#e8fcff" stroke="#3a6ad8" stroke-width="1.5"/><path d="M13.5 3.2 Q12.2 2 10.8 3.2 Q10 4 9.6 6 L8.2 12.5 Q7.6 14.6 5.6 14 " fill="none" stroke="#1a1a2a" stroke-width="1.3"/><path d="M7.2 7.2 H12" stroke="#1a1a2a" stroke-width="1.1"/></svg><div class="t mono" style="left:29px;top:241px;font-size:14px;letter-spacing:-0.4px;color:#000">d_number_isra_0</div><svg class="a" style="left:3px;top:255px" width="20" height="17" viewBox="0 0 20 17"><rect x="0.75" y="0.75" width="18.5" height="15.5" fill="#e8fcff" stroke="#3a6ad8" stroke-width="1.5"/><path d="M13.5 3.2 Q12.2 2 10.8 3.2 Q10 4 9.6 6 L8.2 12.5 Q7.6 14.6 5.6 14 " fill="none" stroke="#1a1a2a" stroke-width="1.3"/><path d="M7.2 7.2 H12" stroke="#1a1a2a" stroke-width="1.1"/></svg><div class="t mono" style="left:29px;top:258px;font-size:14px;letter-spacing:-0.4px;color:#000">d_number_component</div><svg class="a" style="left:3px;top:272px" width="20" height="17" viewBox="0 0 20 17"><rect x="0.75" y="0.75" width="18.5" height="15.5" fill="#e8fcff" stroke="#3a6ad8" stroke-width="1.5"/><path d="M13.5 3.2 Q12.2 2 10.8 3.2 Q10 4 9.6 6 L8.2 12.5 Q7.6 14.6 5.6 14 " fill="none" stroke="#1a1a2a" stroke-width="1.3"/><path d="M7.2 7.2 H12" stroke="#1a1a2a" stroke-width="1.1"/></svg><div class="t mono" style="left:29px;top:275px;font-size:14px;letter-spacing:-0.4px;color:#000">d_compact_number</div><svg class="a" style="left:3px;top:289px" width="20" height="17" viewBox="0 0 20 17"><rect x="0.75" y="0.75" width="18.5" height="15.5" fill="#e8fcff" stroke="#3a6ad8" stroke-width="1.5"/><path d="M13.5 3.2 Q12.2 2 10.8 3.2 Q10 4 9.6 6 L8.2 12.5 Q7.6 14.6 5.6 14 " fill="none" stroke="#1a1a2a" stroke-width="1.3"/><path d="M7.2 7.2 H12" stroke="#1a1a2a" stroke-width="1.1"/></svg><div class="t mono" style="left:29px;top:292px;font-size:14px;letter-spacing:-0.4px;color:#000">d_template_param</div><svg class="a" style="left:3px;top:306px" width="20" height="17" viewBox="0 0 20 17"><rect x="0.75" y="0.75" width="18.5" height="15.5" fill="#e8fcff" stroke="#3a6ad8" stroke-width="1.5"/><path d="M13.5 3.2 Q12.2 2 10.8 3.2 Q10 4 9.6 6 L8.2 12.5 Q7.6 14.6 5.6 14 " fill="none" stroke="#1a1a2a" stroke-width="1.3"/><path d="M7.2 7.2 H12" stroke="#1a1a2a" stroke-width="1.1"/></svg><div class="t mono" style="left:29px;top:309px;font-size:14px;letter-spacing:-0.4px;color:#000">d_discriminator</div><svg class="a" style="left:3px;top:323px" width="20" height="17" viewBox="0 0 20 17"><rect x="0.75" y="0.75" width="18.5" height="15.5" fill="#e8fcff" stroke="#3a6ad8" stroke-width="1.5"/><path d="M13.5 3.2 Q12.2 2 10.8 3.2 Q10 4 9.6 6 L8.2 12.5 Q7.6 14.6 5.6 14 " fill="none" stroke="#1a1a2a" stroke-width="1.3"/><path d="M7.2 7.2 H12" stroke="#1a1a2a" stroke-width="1.1"/></svg><div class="t mono" style="left:29px;top:326px;font-size:14px;letter-spacing:-0.4px;color:#000">d_source_name</div><svg class="a" style="left:3px;top:340px" width="20" height="17" viewBox="0 0 20 17"><rect x="0.75" y="0.75" width="18.5" height="15.5" fill="#e8fcff" stroke="#3a6ad8" stroke-width="1.5"/><path d="M13.5 3.2 Q12.2 2 10.8 3.2 Q10 4 9.6 6 L8.2 12.5 Q7.6 14.6 5.6 14 " fill="none" stroke="#1a1a2a" stroke-width="1.3"/><path d="M7.2 7.2 H12" stroke="#1a1a2a" stroke-width="1.1"/></svg><div class="t mono" style="left:29px;top:343px;font-size:14px;letter-spacing:-0.4px;color:#000">d_call_offset</div><svg class="a" style="left:3px;top:357px" width="20" height="17" viewBox="0 0 20 17"><rect x="0.75" y="0.75" width="18.5" height="15.5" fill="#e8fcff" stroke="#3a6ad8" stroke-width="1.5"/><path d="M13.5 3.2 Q12.2 2 10.8 3.2 Q10 4 9.6 6 L8.2 12.5 Q7.6 14.6 5.6 14 " fill="none" stroke="#1a1a2a" stroke-width="1.3"/><path d="M7.2 7.2 H12" stroke="#1a1a2a" stroke-width="1.1"/></svg><div class="t mono" style="left:29px;top:360px;font-size:14px;letter-spacing:-0.4px;color:#000">d_lookup_template_argument_isra_6</div><svg class="a" style="left:3px;top:374px" width="20" height="17" viewBox="0 0 20 17"><rect x="0.75" y="0.75" width="18.5" height="15.5" fill="#e8fcff" stroke="#3a6ad8" stroke-width="1.5"/><path d="M13.5 3.2 Q12.2 2 10.8 3.2 Q10 4 9.6 6 L8.2 12.5 Q7.6 14.6 5.6 14 " fill="none" stroke="#1a1a2a" stroke-width="1.3"/><path d="M7.2 7.2 H12" stroke="#1a1a2a" stroke-width="1.1"/></svg><div class="t mono" style="left:29px;top:377px;font-size:14px;letter-spacing:-0.4px;color:#000">d_find_pack</div><svg class="a" style="left:3px;top:391px" width="20" height="17" viewBox="0 0 20 17"><rect x="0.75" y="0.75" width="18.5" height="15.5" fill="#e8fcff" stroke="#3a6ad8" stroke-width="1.5"/><path d="M13.5 3.2 Q12.2 2 10.8 3.2 Q10 4 9.6 6 L8.2 12.5 Q7.6 14.6 5.6 14 " fill="none" stroke="#1a1a2a" stroke-width="1.3"/><path d="M7.2 7.2 H12" stroke="#1a1a2a" stroke-width="1.1"/></svg><div class="t mono" style="left:29px;top:394px;font-size:14px;letter-spacing:-0.4px;color:#000">d_growable_string_callback_adapter</div><svg class="a" style="left:3px;top:408px" width="20" height="17" viewBox="0 0 20 17"><rect x="0.75" y="0.75" width="18.5" height="15.5" fill="#e8fcff" stroke="#3a6ad8" stroke-width="1.5"/><path d="M13.5 3.2 Q12.2 2 10.8 3.2 Q10 4 9.6 6 L8.2 12.5 Q7.6 14.6 5.6 14 " fill="none" stroke="#1a1a2a" stroke-width="1.3"/><path d="M7.2 7.2 H12" stroke="#1a1a2a" stroke-width="1.1"/></svg><div class="t mono" style="left:29px;top:411px;font-size:14px;letter-spacing:-0.4px;color:#000">d_expr_primary</div><svg class="a" style="left:3px;top:425px" width="20" height="17" viewBox="0 0 20 17"><rect x="0.75" y="0.75" width="18.5" height="15.5" fill="#e8fcff" stroke="#3a6ad8" stroke-width="1.5"/><path d="M13.5 3.2 Q12.2 2 10.8 3.2 Q10 4 9.6 6 L8.2 12.5 Q7.6 14.6 5.6 14 " fill="none" stroke="#1a1a2a" stroke-width="1.3"/><path d="M7.2 7.2 H12" stroke="#1a1a2a" stroke-width="1.1"/></svg><div class="t mono" style="left:29px;top:428px;font-size:14px;letter-spacing:-0.4px;color:#000">d_template_args</div></div>
<div class="t sans" style="left:6px;top:662px;font-size:16px;letter-spacing:0px;color:#000">Line 7 of 469</div>
<div class="a" style="left:0px;top:685px;width:383px;height:30px;background:#f0f0f0;border:1px solid #777f89"></div><svg class="a" style="left:5px;top:691px" width="16" height="16" viewBox="0 0 16 16"><path d="M7.6 4.5 L4.5 6.5 M7.6 4.5 L10.5 6.5 M4.4 9.5 L1.5 11.5 M4.4 9.5 L5.5 11.5 M10.5 9.5 L9.5 11.5 M10.5 9.5 L13.5 11.5" stroke="#1a5ad0" stroke-width="1"/><rect x="5.5" y="1.3" width="4.2" height="3.2" rx="0.6" fill="#5ab0f8" stroke="#0a30b0" stroke-width="1.1"/><rect x="2.4" y="6.4" width="4.2" height="3.2" rx="0.6" fill="#5ab0f8" stroke="#0a30b0" stroke-width="1.1"/><rect x="8.4" y="6.4" width="4.2" height="3.2" rx="0.6" fill="#5ab0f8" stroke="#0a30b0" stroke-width="1.1"/><rect x="0.6" y="11.4" width="2" height="3.2" rx="0.5" fill="#5ab0f8" stroke="#0a30b0" stroke-width="1.1"/><rect x="4.6" y="11.4" width="2" height="3.2" rx="0.5" fill="#5ab0f8" stroke="#0a30b0" stroke-width="1.1"/><rect x="8.6" y="11.4" width="2" height="3.2" rx="0.5" fill="#5ab0f8" stroke="#0a30b0" stroke-width="1.1"/><rect x="12.6" y="11.4" width="2" height="3.2" rx="0.5" fill="#5ab0f8" stroke="#0a30b0" stroke-width="1.1"/></svg><div class="t mono" style="left:26px;top:695px;font-size:14px;letter-spacing:-0.4px;color:#000">Graph overview</div><div class="a" style="left:309px;top:695px;width:13px;height:13px;border:1.5px solid #2a2a2a;border-top:3px solid #2a2a2a"></div><svg class="a" style="left:338px;top:695px" width="12" height="12" viewBox="0 0 12 12"><rect x="0.75" y="4.75" width="6.5" height="6.5" fill="none" stroke="#333" stroke-width="1.5"/><path d="M3.5 3.5 V0.75 H11.25 V7.5 H8.5" fill="none" stroke="#333" stroke-width="1.5"/></svg><svg class="a" style="left:363px;top:695px" width="12" height="12" viewBox="0 0 12 12"><path d="M1.2 1.2 L10.8 10.8 M10.8 1.2 L1.2 10.8" stroke="#2a2a2a" stroke-width="2"/></svg>
<div class="a" style="left:0;top:715px;width:383px;height:107px;background:linear-gradient(180deg,#ffffff 0%,#e0f4fc 100%)"></div>
<div class="a" style="left:156px;top:717px;width:58px;height:55px;background:#fff;border:1.5px solid #000;box-shadow:2px 2px 2px rgba(0,0,0,0.35)"></div><div class="a" style="left:216px;top:717px;width:30px;height:9px;background:#fff;border:1.5px solid #000;box-shadow:2px 2px 2px rgba(0,0,0,0.35)"></div><div class="a" style="left:159px;top:772px;width:26px;height:2px;background:#e03030"></div><div class="a" style="left:185px;top:772px;width:25px;height:2px;background:#208a20"></div><div class="a" style="left:159px;top:782px;width:2px;height:6px;background:#6060ff"></div><div class="a" style="left:159px;top:787px;width:52px;height:2px;background:#5050f0"></div><div class="a" style="left:185px;top:799px;width:2px;height:4px;background:#2020f0"></div><div class="a" style="left:136px;top:774px;width:49px;height:9px;background:#fff;border:1.5px solid #000;box-shadow:2px 2px 2px rgba(0,0,0,0.35)"></div><div class="a" style="left:185px;top:774px;width:50px;height:12px;background:#fff;border:1.5px solid #000;box-shadow:2px 2px 2px rgba(0,0,0,0.35)"></div><div class="a" style="left:175px;top:789px;width:22px;height:11px;background:#fff;border:1.5px solid #000;box-shadow:2px 2px 2px rgba(0,0,0,0.35)"></div><div class="a" style="left:175px;top:802px;width:21px;height:17px;background:#fff;border:1.5px solid #000;box-shadow:2px 2px 2px rgba(0,0,0,0.35)"></div><svg class="a" style="left:116px;top:733px" width="149" height="64" viewBox="0 0 149 64"><rect x="1.5" y="1.5" width="146" height="61" fill="none" stroke="#000" stroke-width="1.4" stroke-dasharray="1.4 2.2"/></svg>
<div class="a" style="left:387px;top:161px;width:1533px;height:1px;background:#a8a8a8"></div>
<div class="a" style="left:389px;top:136px;width:215px;height:25px;background:#f2f2f2;border-left:1px solid #e4e4e4;border-top:1px solid #e4e4e4"></div>
<svg class="a" style="left:402px;top:140px" width="18" height="18" viewBox="0 0 18 18"><defs><linearGradient id="tg1" x1="0" x2="1" y1="0" y2="0.3"><stop offset="0" stop-color="#40e0ff"/><stop offset="1" stop-color="#2030d0"/></linearGradient></defs><rect x="0.5" y="0.5" width="13.0" height="13.0" fill="#fbffff" stroke="#2a70e0" stroke-width="1.1"/><rect x="0.0" y="0.0" width="14.0" height="3" fill="url(#tg1)"/><rect x="5.5" y="3.5" width="11" height="12" fill="#f4faff" stroke="#1a4a8a" stroke-width="1.1"/><path d="M7.5 6.5 H10 M9.5 8.5 H13 M9.5 10.5 H13 M7.5 12.5 H10 M9.5 14.5 H13" stroke="#3a4a5a" stroke-width="1"/></svg>
<div class="t mono" style="left:453px;top:144px;font-size:14px;letter-spacing:-0.4px;color:#000">IDA View-A</div>
<svg class="a" style="left:573px;top:142px" width="14" height="14" viewBox="0 0 14 14"><rect x="0.5" y="0.5" width="13" height="13" rx="2" fill="#c0c0c0" stroke="#a8a8a8"/><path d="M4 4 L10 10 M10 4 L4 10" stroke="#fff" stroke-width="2"/></svg>
<div class="a" style="left:604px;top:135px;width:223px;height:28px;background:#fafafa"></div>
<svg class="a" style="left:621px;top:139px" width="18" height="18" viewBox="0 0 18 18"><defs><linearGradient id="tg2" x1="0" x2="1" y1="0" y2="0.3"><stop offset="0" stop-color="#40e0ff"/><stop offset="1" stop-color="#2030d0"/></linearGradient></defs><rect x="0.5" y="0.5" width="13.0" height="13.0" fill="#fbffff" stroke="#2a70e0" stroke-width="1.1"/><rect x="0.0" y="0.0" width="14.0" height="3" fill="url(#tg2)"/><rect x="5.5" y="3.5" width="11" height="12" fill="#f4faff" stroke="#1a4a8a" stroke-width="1.1"/><path d="M7.5 6.5 H10 M9.5 8.5 H13 M9.5 10.5 H13 M7.5 12.5 H10 M9.5 14.5 H13" stroke="#3a4a5a" stroke-width="1"/></svg>
<div class="t mono" style="left:664px;top:144px;font-size:14px;letter-spacing:-0.4px;color:#000">Pseudocode-A</div>
<svg class="a" style="left:792px;top:141px" width="15" height="14" viewBox="0 0 15 14"><rect x="0.5" y="0.5" width="14" height="13" rx="2" fill="#e05a3a" stroke="#c04020"/><path d="M4 3.5 L11 10.5 M11 3.5 L4 10.5" stroke="#fff" stroke-width="2"/></svg>
<div class="a" style="left:827px;top:136px;width:217px;height:25px;background:#f2f2f2;border-left:1px solid #e4e4e4;border-top:1px solid #e4e4e4"></div>
<svg class="a" style="left:840px;top:140px" width="17" height="17" viewBox="0 0 17 17"><defs><linearGradient id="tg3" x1="0" x2="1" y1="0" y2="0.3"><stop offset="0" stop-color="#40e0ff"/><stop offset="1" stop-color="#2030d0"/></linearGradient></defs><rect x="0.5" y="0.5" width="15.0" height="14.0" fill="#fbffff" stroke="#2a70e0" stroke-width="1.1"/><rect x="0.0" y="0.0" width="16.0" height="3" fill="url(#tg3)"/><path d="M8 4.5 L12 6.5 V10.5 L8 12.5 L4 10.5 V6.5Z" fill="#dce8ff" stroke="#3a4ad0" stroke-width="1.1"/></svg>
<div class="t mono" style="left:891px;top:144px;font-size:14px;letter-spacing:-0.4px;color:#000">Hex View-1</div>
<svg class="a" style="left:1011px;top:142px" width="14" height="14" viewBox="0 0 14 14"><rect x="0.5" y="0.5" width="13" height="13" rx="2" fill="#c0c0c0" stroke="#a8a8a8"/><path d="M4 4 L10 10 M10 4 L4 10" stroke="#fff" stroke-width="2"/></svg>
<div class="a" style="left:1044px;top:136px;width:219px;height:25px;background:#f2f2f2;border-left:1px solid #e4e4e4;border-top:1px solid #e4e4e4"></div>
<svg class="a" style="left:1059px;top:140px" width="17" height="17" viewBox="0 0 17 17"><defs><linearGradient id="tg4" x1="0" x2="1" y1="0" y2="0.3"><stop offset="0" stop-color="#40e0ff"/><stop offset="1" stop-color="#2030d0"/></linearGradient></defs><rect x="0.5" y="0.5" width="14.0" height="14.0" fill="#fbffff" stroke="#2a70e0" stroke-width="1.1"/><rect x="0.0" y="0.0" width="15.0" height="3" fill="url(#tg4)"/><rect x="5.8" y="4.3" width="3.4" height="2.6" fill="none" stroke="#0a2a6a" stroke-width="1.2"/><path d="M6 7 L4 13.5 M9 7 L11 13.5 M5.5 12 L9 8.8" stroke="#0a2a6a" stroke-width="1.3" fill="none"/></svg>
<div class="t mono" style="left:1110px;top:144px;font-size:14px;letter-spacing:-0.4px;color:#000">Structures</div>
<svg class="a" style="left:1230px;top:142px" width="14" height="14" viewBox="0 0 14 14"><rect x="0.5" y="0.5" width="13" height="13" rx="2" fill="#c0c0c0" stroke="#a8a8a8"/><path d="M4 4 L10 10 M10 4 L4 10" stroke="#fff" stroke-width="2"/></svg>
<div class="a" style="left:1263px;top:136px;width:218px;height:25px;background:#f2f2f2;border-left:1px solid #e4e4e4;border-top:1px solid #e4e4e4"></div>
<svg class="a" style="left:1278px;top:140px" width="17" height="17" viewBox="0 0 17 17"><defs><linearGradient id="tg5" x1="0" x2="1" y1="0" y2="0.3"><stop offset="0" stop-color="#40e0ff"/><stop offset="1" stop-color="#2030d0"/></linearGradient></defs><rect x="0.5" y="0.5" width="15.0" height="14.0" fill="#fbffff" stroke="#2a70e0" stroke-width="1.1"/><rect x="0.0" y="0.0" width="16.0" height="3" fill="url(#tg5)"/><path d="M5.5 3.5 L7 4.8 L5.5 6 L4 4.8Z M5.5 7.5 L7 8.8 L5.5 10 L4 8.8Z M5.5 11.5 L7 12.8 L5.5 14 L4 12.8Z" fill="#30e0ff" stroke="#0a2a7a" stroke-width="0.9"/><path d="M8.5 4.8 H11 M8.5 8.8 H11 M8.5 12.8 H11" stroke="#0a40b0" stroke-width="1.1"/></svg>
<div class="t mono" style="left:1349px;top:144px;font-size:14px;letter-spacing:-0.4px;color:#000">Enums</div>
<svg class="a" style="left:1449px;top:142px" width="14" height="14" viewBox="0 0 14 14"><rect x="0.5" y="0.5" width="13" height="13" rx="2" fill="#c0c0c0" stroke="#a8a8a8"/><path d="M4 4 L10 10 M10 4 L4 10" stroke="#fff" stroke-width="2"/></svg>
<div class="a" style="left:1481px;top:136px;width:218px;height:25px;background:#f2f2f2;border-left:1px solid #e4e4e4;border-top:1px solid #e4e4e4"></div>
<svg class="a" style="left:1497px;top:140px" width="17" height="17" viewBox="0 0 17 17"><defs><linearGradient id="tg6" x1="0" x2="1" y1="0" y2="0.3"><stop offset="0" stop-color="#40e0ff"/><stop offset="1" stop-color="#2030d0"/></linearGradient></defs><rect x="0.5" y="0.5" width="14.0" height="14.0" fill="#fbffff" stroke="#2a70e0" stroke-width="1.1"/><rect x="0.0" y="0.0" width="15.0" height="3" fill="url(#tg6)"/><rect x="6.5" y="5.5" width="9" height="10" fill="#f4faff" stroke="#0a3a7a" stroke-width="1.1"/><path d="M8.5 7.5 H12.5 M8.5 9.5 H12.5 M8.5 11.5 H12.5 M8.5 13.5 H12.5" stroke="#0a10a0" stroke-width="1"/><path d="M1.5 5 L5 8 L1.5 11 L3 8Z M2 7.2 H6" stroke="#0a4a0a" stroke-width="0.8" fill="#30d030"/></svg>
<div class="t mono" style="left:1560px;top:144px;font-size:14px;letter-spacing:-0.4px;color:#000">Imports</div>
<svg class="a" style="left:1668px;top:142px" width="14" height="14" viewBox="0 0 14 14"><rect x="0.5" y="0.5" width="13" height="13" rx="2" fill="#c0c0c0" stroke="#a8a8a8"/><path d="M4 4 L10 10 M10 4 L4 10" stroke="#fff" stroke-width="2"/></svg>
<div class="a" style="left:1699px;top:136px;width:221px;height:25px;background:#f2f2f2;border-left:1px solid #e4e4e4;border-top:1px solid #e4e4e4"></div>
<svg class="a" style="left:1716px;top:140px" width="17" height="17" viewBox="0 0 17 17"><defs><linearGradient id="tg7" x1="0" x2="1" y1="0" y2="0.3"><stop offset="0" stop-color="#40e0ff"/><stop offset="1" stop-color="#2030d0"/></linearGradient></defs><rect x="1.5" y="0.5" width="14.0" height="14.0" fill="#fbffff" stroke="#2a70e0" stroke-width="1.1"/><rect x="1.0" y="0.0" width="15.0" height="3" fill="url(#tg7)"/><rect x="0.5" y="5.5" width="9.5" height="10" fill="#fbffff" stroke="#1a4a8a" stroke-width="1.1"/><path d="M2.5 7.5 H5.5 M2.5 9.5 H5.5 M2.5 11.5 H5.5 M2.5 13.5 H6.5" stroke="#0a10a0" stroke-width="1"/><path d="M13.5 7.5 L10 4 V6.3 Q7 6.5 6.5 10 Q8 8.5 10 8.8 V11Z" fill="#30d030" stroke="#0a3a0a" stroke-width="0.8"/></svg>
<div class="t mono" style="left:1779px;top:144px;font-size:14px;letter-spacing:-0.4px;color:#000">Exports</div>
<svg class="a" style="left:1887px;top:142px" width="14" height="14" viewBox="0 0 14 14"><rect x="0.5" y="0.5" width="13" height="13" rx="2" fill="#c0c0c0" stroke="#a8a8a8"/><path d="M4 4 L10 10 M10 4 L4 10" stroke="#fff" stroke-width="2"/></svg>
<div class="a" style="left:387px;top:163px;width:1533px;height:659px;background:#ffffff"></div>
<div class="a" style="left:433px;top:163px;width:5px;height:659px;background:#ececec"></div>
<div class="a" style="left:438px;top:163px;width:1482px;height:20px;background:#e6e6e6"></div>
<div class="ln" style="left:422px;top:165px;color:#988b7e">1</div>
<div class="ln" style="left:422px;top:185px;color:#988b7e">2</div>
<div class="ln" style="left:422px;top:205px;color:#988b7e">3</div>
<div class="ln" style="left:422px;top:225px;color:#988b7e">4</div>
<div class="ln" style="left:422px;top:245px;color:#988b7e">5</div>
<div class="ln" style="left:422px;top:265px;color:#988b7e">6</div>
<div class="ln" style="left:422px;top:285px;color:#988b7e">7</div>
<div class="ln" style="left:422px;top:305px;color:#988b7e">8</div>
<div class="ln" style="left:422px;top:325px;color:#988b7e">9</div>
<div class="ln" style="left:413px;top:345px;color:#988b7e">10</div>
<div class="ln" style="left:413px;top:365px;color:#988b7e">11</div>
<div class="ln" style="left:413px;top:385px;color:#988b7e">12</div>
<div class="ln" style="left:413px;top:405px;color:#988b7e">13</div>
<div class="a" style="left:394px;top:267px;width:11px;height:11px;border-radius:50%;background:#5ac8fa"></div>
<div class="a" style="left:394px;top:287px;width:11px;height:11px;border-radius:50%;background:#5ac8fa"></div>
<div class="a" style="left:394px;top:307px;width:11px;height:11px;border-radius:50%;background:#5ac8fa"></div>
<div class="a" style="left:394px;top:327px;width:11px;height:11px;border-radius:50%;background:#5ac8fa"></div>
<div class="a" style="left:394px;top:367px;width:11px;height:11px;border-radius:50%;background:#5ac8fa"></div>
<div class="a" style="left:394px;top:387px;width:11px;height:11px;border-radius:50%;background:#5ac8fa"></div>
<div class="a" style="left:394px;top:407px;width:11px;height:11px;border-radius:50%;background:#5ac8fa"></div>
<div class="a" style="left:438px;top:163px;width:27px;height:20px;background:#e6e632"></div>
<div class="a" style="left:591px;top:163px;width:27px;height:20px;background:#e6e632"></div>
<div class="ln" style="left:438px;top:165px"><span style="color:#000080">int</span><span style="color:#000080"> __cdecl main(</span><span style="color:#000080">int</span><span style="color:#000080"> argc, const char **argv, const char **envp)</span></div>
<div class="ln" style="left:438px;top:185px"><span style="color:#000080">{</span></div>
<div class="a" style="left:456px;top:203px;width:27px;height:20px;background:#ffff30"></div>
<div class="ln" style="left:438px;top:205px"><span style="color:#000080">  </span><span style="color:#000080">int</span><span style="color:#000080"> b; </span><span style="color:#0000ff">// </span><span style="color:#8080ff">[rsp+28h] [rbp-8h] BYREF</span></div>
<div class="a" style="left:456px;top:223px;width:27px;height:20px;background:#ffff30"></div>
<div class="ln" style="left:438px;top:225px"><span style="color:#000080">  </span><span style="color:#000080">int</span><span style="color:#000080"> a; </span><span style="color:#0000ff">// </span><span style="color:#8080ff">[rsp+2Ch] [rbp-4h] BYREF</span></div>
<div class="ln" style="left:438px;top:245px"></div>
<div class="ln" style="left:438px;top:265px"><span style="color:#000080">  </span><span style="color:#0000ff">_main</span><span style="color:#000080">();</span></div>
<div class="ln" style="left:438px;top:285px"><span style="color:#000080">  </span><span style="color:#0000ff">scanf</span><span style="color:#000080">(</span><span style="color:#008000">"%d%d"</span><span style="color:#000080">, &amp;</span><span style="color:#8080ff">a</span><span style="color:#000080">, &amp;</span><span style="color:#8080ff">b</span><span style="color:#000080">);</span></div>
<div class="ln" style="left:438px;top:305px"><span style="color:#000080">  if ( </span><span style="color:#8080ff">a</span><span style="color:#000080"> == </span><span style="color:#8080ff">b</span><span style="color:#000080"> )</span></div>
<div class="ln" style="left:438px;top:325px"><span style="color:#000080">    </span><span style="color:#0000ff">printf</span><span style="color:#000080">(</span><span style="color:#008000">"flag{this_Is_a_EaSyRe}"</span><span style="color:#000080">);</span></div>
<div class="ln" style="left:438px;top:345px"><span style="color:#000080">  else</span></div>
<div class="ln" style="left:438px;top:365px"><span style="color:#000080">    </span><span style="color:#0000ff">printf</span><span style="color:#000080">(</span><span style="color:#008000">"sorry,you can't get flag"</span><span style="color:#000080">);</span></div>
<div class="ln" style="left:438px;top:385px"><span style="color:#000080">  return 0;</span></div>
<div class="ln" style="left:438px;top:405px"><span style="color:#000080">}</span></div>
<div class="a" style="left:437px;top:799px;width:1483px;height:21px;background:#f0f0f0"></div>
<div class="a" style="left:437px;top:820px;width:1483px;height:2px;background:#1a6fc8"></div>
<div class="t mono" style="left:440px;top:805px;font-size:15px;letter-spacing:0px;color:#000">00000AF0</div>
<div class="a" style="left:513px;top:801px;width:1px;height:17px;background:#d0d0d0"></div>
<div class="t mono" style="left:517px;top:805px;font-size:15px;letter-spacing:0px;color:#000">main:1 (4014F0)</div>
<div class="a" style="left:654px;top:801px;width:1px;height:18px;background:#d0d0d0"></div>
<div class="a" style="left:669px;top:801px;width:1px;height:18px;background:#d0d0d0"></div>
<div class="a" style="left:0;top:826px;width:1920px;height:30px;background:#f0f0f0;border:1px solid #777f89"></div>
<svg class="a" style="left:4px;top:831px" width="16" height="17" viewBox="0 0 16 17"><rect x="0.5" y="0.5" width="14" height="16" fill="#f4f8ff" stroke="#5a6a7a"/><rect x="0.5" y="0.5" width="14" height="2" fill="#3a9ae8"/><path d="M3 5.5 H12 M3 7.5 H12 M3 9.5 H12 M3 11.5 H12 M3 13.5 H12" stroke="#4a5a6a"/></svg>
<div class="t mono" style="left:26px;top:834px;font-size:14px;letter-spacing:-0.4px;color:#000">Output</div>
<div class="a" style="left:1846px;top:836px;width:13px;height:13px;border:1.5px solid #2a2a2a;border-top:3px solid #2a2a2a"></div>
<svg class="a" style="left:1875px;top:836px" width="12" height="12" viewBox="0 0 12 12"><rect x="0.75" y="4.75" width="6.5" height="6.5" fill="none" stroke="#333" stroke-width="1.5"/><path d="M3.5 3.5 V0.75 H11.25 V7.5 H8.5" fill="none" stroke="#333" stroke-width="1.5"/></svg>
<svg class="a" style="left:1900px;top:836px" width="12" height="12" viewBox="0 0 12 12"><path d="M1.2 1.2 L10.8 10.8 M10.8 1.2 L1.2 10.8" stroke="#2a2a2a" stroke-width="2"/></svg>
<div class="a" style="left:0;top:858px;width:1920px;height:110px;background:#f0f0f0;border:1px solid #777f89"></div>
<div class="a" style="left:1px;top:859px;width:1898px;height:108px;background:#fff;overflow:hidden"><div class="ln" style="left:6px;top:-10px;color:#000">IDA is analysing the input file...</div><div class="ln" style="left:6px;top:10px;color:#000">You may start to explore the input file right now.</div><div class="ln" style="left:6px;top:30px;color:#000">Using FLIRT signature: SEH for vc64 7-14</div><div class="ln" style="left:6px;top:50px;color:#000">Propagating type information...</div><div class="ln" style="left:6px;top:70px;color:#000">Function argument information has been propagated</div><div class="ln" style="left:6px;top:90px;color:#000">The initial autoanalysis has been finished.</div></div>
<div class="a" style="left:1906px;top:924px;width:6px;height:22px;background:#8a8a8a"></div>
<div class="a" style="left:3px;top:971px;width:61px;height:25px;background:#fdfdfd;border:1px solid #d0d0d0;border-radius:4px"></div>
<div class="t mono" style="left:21px;top:978px;font-size:14px;letter-spacing:-0.4px;color:#000">IDC</div>
<div class="a" style="left:69px;top:971px;width:1849px;height:25px;background:#fff;border-bottom:1px solid #8a8a8a;border-right:1px solid #e0e0e0;border-top-right-radius:3px"></div>
<div class="t mono" style="left:2px;top:1004px;font-size:15px;letter-spacing:0px;color:#000">AU:  idle</div>
<div class="a" style="left:102px;top:1000px;width:1px;height:20px;background:#d0d0d0"></div>
<div class="t mono" style="left:107px;top:1004px;font-size:15px;letter-spacing:0px;color:#000">Down</div>
<div class="a" style="left:178px;top:1000px;width:1px;height:20px;background:#d0d0d0"></div>
<div class="t mono" style="left:183px;top:1004px;font-size:15px;letter-spacing:0px;color:#000">Disk: 29GB</div>
<div class="a" style="left:274px;top:1000px;width:1px;height:20px;background:#d0d0d0"></div>
</body></html>
